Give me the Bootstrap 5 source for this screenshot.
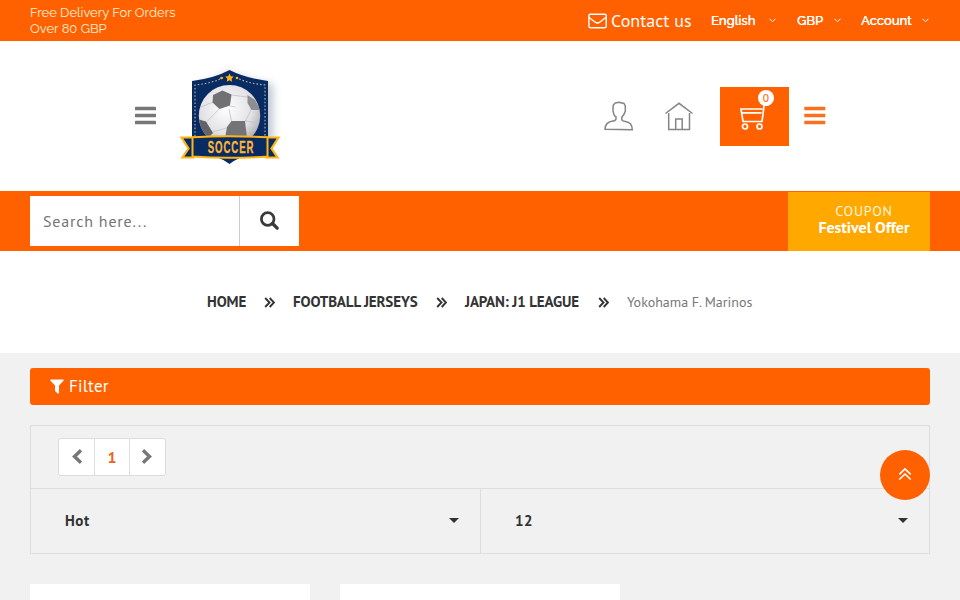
<!DOCTYPE html>
<html lang="en">
<head>
<meta charset="utf-8">
<meta name="viewport" content="width=device-width, initial-scale=1">
<title>Yokohama F. Marinos</title>
<link href="https://cdn.jsdelivr.net/npm/bootstrap@5.3.0/dist/css/bootstrap.min.css" rel="stylesheet">
<style>
:root{--brand:#ff6100}
body{font-family:"PT Sans","Noto Sans",sans-serif;background:#f1f1f1;color:#333;height:600px;overflow:hidden;font-size:16px}
svg{display:block;flex:none}
.bg-brand{background:var(--brand)}
.page-x{padding-left:30px;padding-right:30px}
.topline{height:41px;font-family:Raleway,Lato,sans-serif;font-size:13px;color:#fff}
.delivery{line-height:16px;padding-top:5px;color:#fff0d8}
.contact{font-family:"PT Sans","Noto Sans",sans-serif;font-size:18px;width:81px;line-height:24px;margin-left:4px}
.top-link{font-weight:500;line-height:20px;text-shadow:.3px 0 0 #fff}
.link-lang{margin-left:19px;width:58px}
.link-cur{margin-left:21px;width:37px}
.link-acc{margin-left:20px;width:61px}
.masthead{height:150px;padding:0 134px 0 134px}
.cart{width:69px;height:59px;margin:46px 0 0 27px}
.cart-count{top:3px;right:15px;width:16px;height:16px;font:11px/16px "Noto Sans",sans-serif;color:var(--brand)}
.searchline{height:60px}
.search{width:269px;height:50px;margin-top:5px}
.search input{width:210px;border:0;border-right:1px solid #ccc;padding:0 13px;font-size:16px;letter-spacing:.8px;outline:0}
.search input::placeholder{color:#757575;opacity:1}
.search button{border:0;background:#fff;width:59px;padding-left:20px}
.coupon{width:142px;height:59px;margin-top:1px;padding:11px 0 0 10px;background:#ffa800;color:#fff;line-height:16px}
.coupon small{font-size:14px;letter-spacing:.8px;line-height:16px;color:#fff5dc}
.coupon strong{font-size:16px;letter-spacing:-.05px}
.crumbs{height:102px;padding-left:207px}
.crumbs a{flex:none;color:#333;font-weight:700;font-size:15px;letter-spacing:-.13px;text-decoration:none}
.crumb-sep{margin:0 18px 0}
.filter{height:37px;border:0;border-radius:3px;margin-top:15px;padding:0 20px;font-size:17px;letter-spacing:.25px;color:#fff}
.toolbox{height:129px;margin-top:20px;border:1px solid #ddd}
.pager{height:63px;border-bottom:1px solid #ddd;padding:12px 0 0 27px}
.pager .page-link{height:38px;width:36px;padding:0;display:flex;align-items:center;justify-content:center;border-color:#ddd;color:#777;border-radius:0}
.pager .page-item:first-child .page-link{width:37px;border-radius:3px 0 0 3px}
.pager .page-item:last-child .page-link{width:37px;padding-right:2px;border-radius:0 3px 3px 0}
.pager svg{margin-top:-1px}
.pager .current{color:#e8641b;font-weight:700;font-size:16px}
.choice{height:64px;padding:0 21px 0 34px;font-weight:700;font-size:15px;letter-spacing:.6px}
.choice + .choice{border-left:1px solid #ddd}
.caret{width:10px;height:5px;margin-top:-1px}
.products{gap:30px;margin-top:30px}
.tile{width:280px;height:16px}
.to-top{right:30px;top:450px;width:50px;height:50px}
</style>
</head>
<body>
<div class="topline bg-brand page-x d-flex justify-content-between">
  <div class="delivery">Free Delivery For Orders<br>Over 80 GBP</div>
  <div class="d-flex align-items-center">
    <svg width="19" height="16" viewBox="0 0 19 16" fill="none" stroke="#fff" stroke-width="1.4"><rect x=".9" y="1.2" width="17.3" height="13.5" rx="1.4"/><path d="M1 4.2c2 1.8 4 3.2 6 4.800q2.500 2 5 0c2-1.600 4-3 6.100-4.800"/></svg>
    <span class="contact">Contact us</span>
    <span class="top-link link-lang">English</span>
    <svg width="7" height="5" fill="none" stroke="#fff"><path d="M.5.700 3.500 3.700 6.500.7"/></svg>
    <span class="top-link link-cur">GBP</span>
    <svg width="7" height="5" fill="none" stroke="#fff"><path d="M.5.700 3.500 3.700 6.500.7"/></svg>
    <span class="top-link link-acc">Account</span>
    <svg style="margin-right:1px" width="7" height="5" fill="none" stroke="#fff"><path d="M.5.700 3.500 3.700 6.500.7"/></svg>
  </div>
</div>

<header class="masthead bg-white d-flex align-items-start">
  <svg style="margin-top:65px" width="22" height="19" fill="#777"><rect x="1" y=".700" width="21" height="3.600" rx=".6"/><rect x="1" y="7.700" width="21" height="3.600" rx=".6"/><rect x="1" y="14.700" width="21" height="3.600" rx=".6"/></svg>
  <svg style="margin:19px 0 0 24px" width="110" height="114" viewBox="0 0 110 114">
    <defs>
      <radialGradient id="leather" cx=".45" cy=".38" r=".65"><stop offset="0" stop-color="#fff"/><stop offset=".65" stop-color="#e2e2e5"/><stop offset="1" stop-color="#a9a9ad"/></radialGradient>
      <filter id="soft" x="-20%" y="-20%" width="150%" height="140%"><feGaussianBlur stdDeviation="4"/></filter>
      <clipPath id="ballclip"><circle cx="49.500" cy="55.700" r="30.700"/></clipPath>
    </defs>
    <path d="M20 24Q34 21 49 12 68 22 93 24v58H20z" fill="#a9afbc" opacity=".7" filter="url(#soft)"/>
    <path d="M12 21Q35 18 49.500 10 65 18 88 21V92Q62 94 49.500 104 36 94 12 92z" fill="#092b63"/>
    <path d="M15 80V25Q34 23 43 17.500M56 17.500Q66 23 85 25v55" fill="none" stroke="#b9b898" stroke-width="1.100" stroke-dasharray="1.600 2"/>
    <path d="m49.500 13.500 1.300 2.700 3 .4-2.200 2.100.5 3-2.600-1.500-2.700 1.500.5-3-2.100-2.100 3-.4z" fill="#ffb31a"/><circle cx="41.500" cy="18" r="1.300" fill="#ffb31a"/><circle cx="57" cy="18" r="1.300" fill="#ffb31a"/>
    <circle cx="49.500" cy="55.700" r="30.700" fill="url(#leather)"/>
    <g clip-path="url(#ballclip)">
      <g fill="none" stroke="#c3c3c7" stroke-width=".8"><path d="M51.500 35 67.500 37M49.500 46l6 1M71.500 49l-6 12M51.500 61 49 49M39 49 27 61.500M32.500 72l14-4M65 61l14 2M33 42l-12 5"/></g>
      <path d="m33 35 9.500-4.500 9 4-1.500 11-10.500 3.500-7-6.500z" fill="#717175"/><path d="m67.500 35 7.500 5 5.500 10h-9l-4-7z" fill="#8d8d92"/><path d="M51.500 61H65l2 17H45l2-11z" fill="#747478"/><path d="m17 59 9 2.500L33 73l-5 5-12-10z" fill="#626267"/>
    </g>
    <path d="M1.500 77.500h12v20H2.500l6-9zM98.500 77.500H86v20h11.500l-6-9z" fill="#092b63" stroke="#ffb515" stroke-width="2.200"/>
    <path d="M12.500 77.300Q49 75 87.500 77.300v19.200Q49 99 12.500 96.500z" fill="#092b63" stroke="#ffb515" stroke-width="2"/>
    <text transform="translate(27.800 92.800) scale(.6 1)" textLength="76" lengthAdjust="spacing" font-family="Liberation Sans,sans-serif" font-weight="700" font-size="16" fill="#ffb733" stroke="#ffb733" stroke-width=".3">SOCCER</text>
  </svg>
  <div class="ms-auto d-flex align-items-start">
    <svg style="margin-top:60px" width="30" height="30" fill="none" stroke="#858585" stroke-width="1.500"><path d="M1 28.300c0-4.600 3.200-7.500 8-8.200 2-.3 3-1 3-2.300v-2c-1.300-.7-2.300-2.300-2.500-4L9 10V7.500l.3-3.500 2-2 3.700-.7 5 1.200 1.300 2.500v5.300l-1.300 3-2.200 3v2c0 1.400 1.500 2 3.500 2.300 4.500.7 7 3.700 7 8.200z"/></svg>
    <svg style="margin:61px 0 0 31px" width="28" height="29" fill="none" stroke="#858585" stroke-width="1.500"><path d="M.5 11.500 14 1.300l13.500 10.200M3.700 11v16.500h20.800V11M10.700 27.500V17h6.500v10.500"/></svg>
    <div class="cart bg-brand position-relative">
      <svg class="position-absolute" style="left:20px;top:17px" width="27" height="27" fill="none" stroke="#fff" stroke-width="1.700"><path d="M0 5h22.500M1 5l2 12.500h19L24.300 0M2 8.800h19.500"/><circle cx="5" cy="22.500" r="2.500"/><circle cx="19.500" cy="22.500" r="2.500"/></svg>
      <span class="cart-count position-absolute bg-white rounded-circle text-center">0</span>
    </div>
    <svg style="margin:65px 0 0 15px" width="22" height="19" fill="#f7721f"><rect x=".300" y=".700" width="21" height="3.600" rx=".6"/><rect x=".300" y="7.700" width="21" height="3.600" rx=".6"/><rect x=".300" y="14.700" width="21" height="3.600" rx=".6"/></svg>
  </div>
</header>

<div class="searchline bg-brand page-x d-flex justify-content-between">
  <form class="search d-flex bg-white">
    <input type="text" placeholder="Search here..." aria-label="Search">
    <button type="button" aria-label="Search"><svg width="20" height="20" fill="none" stroke="#3a3a3a" stroke-width="2.800"><circle cx="7.700" cy="8" r="6.300"/><path d="m12.500 12.500 4.700 4.700" stroke-width="3.300" stroke-linecap="round"/></svg></button>
  </form>
  <div class="coupon text-center"><small class="d-block">COUPON</small><strong class="d-block">Festivel Offer</strong></div>
</div>

<nav class="crumbs bg-white d-flex align-items-center" aria-label="breadcrumb">
  <a href="#" style="width:39px">HOME</a>
  <svg class="crumb-sep" width="11" height="11" fill="none" stroke="#333" stroke-width="1.900"><path d="m1.200 1 4.300 4.500-4.300 4.500M5.700 1 10 5.500 5.700 10"/></svg>
  <a href="#" style="width:125px">FOOTBALL JERSEYS</a>
  <svg class="crumb-sep" width="11" height="11" fill="none" stroke="#333" stroke-width="1.900"><path d="m1.200 1 4.300 4.500-4.300 4.500M5.700 1 10 5.500 5.700 10"/></svg>
  <a href="#" style="width:115px">JAPAN: J1 LEAGUE</a>
  <svg class="crumb-sep" width="11" height="11" fill="none" stroke="#333" stroke-width="1.900"><path d="m1.200 1 4.300 4.500-4.300 4.500M5.700 1 10 5.500 5.700 10"/></svg>
  <span style="font-size:14px;color:#777">Yokohama F. Marinos</span>
</nav>

<main class="page-x">
  <div class="filter bg-brand d-flex align-items-center"><svg style="margin-right:5px" width="14" height="15" fill="#fff"><path d="M.8.500h12.400q1 .4.300 1.300L9 6.500v7.700l-1 .5L5 12V6.500L.5 1.800Q-.1.800.8.500z"/></svg>Filter</div>
  <section class="toolbox">
    <ul class="pager pagination m-0">
      <li class="page-item"><a class="page-link" href="#" aria-label="Previous"><svg width="12" height="15" fill="none" stroke="#777" stroke-width="3.400"><path d="M10 1.300 3.500 7.500 10 13.700"/></svg></a></li>
      <li class="page-item"><a class="page-link current" href="#">1</a></li>
      <li class="page-item"><a class="page-link" href="#" aria-label="Next"><svg width="12" height="15" fill="none" stroke="#777" stroke-width="3.400"><path d="M2 1.300 8.500 7.500 2 13.700"/></svg></a></li>
    </ul>
    <div class="row g-0">
      <div class="choice col-6 d-flex align-items-center justify-content-between">Hot<svg class="caret" fill="#333"><path d="M0 0h10L5 5z"/></svg></div>
      <div class="choice col-6 d-flex align-items-center justify-content-between">12<svg class="caret" fill="#333"><path d="M0 0h10L5 5z"/></svg></div>
    </div>
  </section>
  <div class="products d-flex"><div class="tile bg-white"></div><div class="tile bg-white"></div></div>
</main>
<a href="#" class="to-top bg-brand position-fixed rounded-circle d-flex align-items-center justify-content-center" aria-label="Back to top"><svg style="margin-top:-3px" width="14" height="14" fill="none" stroke="#fff" stroke-width="1.600"><path d="m1.300 7.300 5.700-5.500 5.700 5.500M1.300 12.500 7 7l5.700 5.500"/></svg></a>
<script src="https://cdn.jsdelivr.net/npm/bootstrap@5.3.0/dist/js/bootstrap.bundle.min.js"></script>
</body>
</html>
